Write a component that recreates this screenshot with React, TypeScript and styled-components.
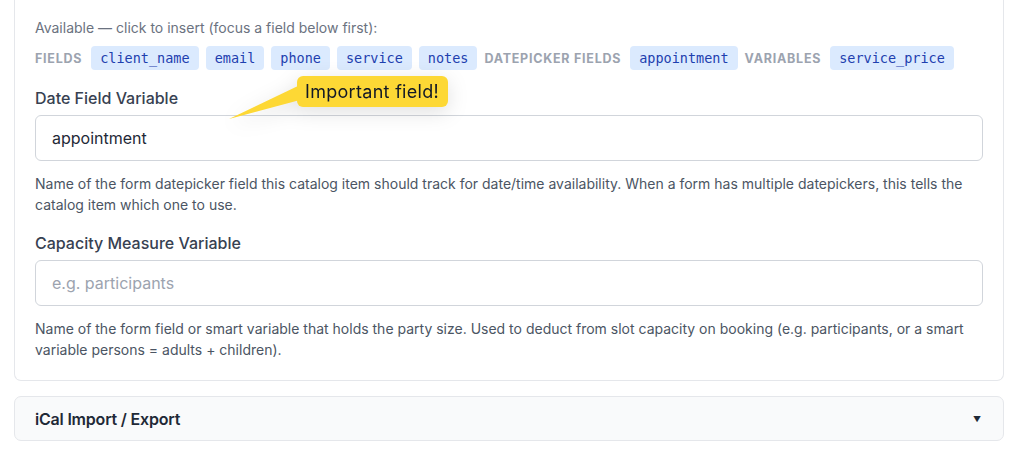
import React from "react";
import styled, { createGlobalStyle } from "styled-components";

const GlobalStyle = createGlobalStyle`
  html, body {
    margin: 0;
    padding: 0;
    background: #ffffff;
  }
  body {
    font-family: Inter, "Liberation Sans", Arial, sans-serif;
    -webkit-font-smoothing: antialiased;
  }
  * { box-sizing: border-box; }
`;

const Page = styled.div`
  width: 1024px;
  height: 451px;
  overflow: hidden;
  padding: 0 20px 0 14px;
  display: flex;
  flex-direction: column;
  gap: 15px;
`;

const Card = styled.section`
  position: relative;
  border: 1px solid #e5e7eb;
  border-top: none;
  border-radius: 0 0 7px 7px;
  background: #fff;
  padding: 18px 20px 20px 20px;
  display: flex;
  flex-direction: column;
`;

const Hint = styled.div`
  font-size: 14px;
  line-height: 20px;
  color: #6b7280;
`;

const ChipRow = styled.div`
  margin-top: 8px;
  display: flex;
  align-items: center;
  flex-wrap: wrap;
  gap: 7px;
`;

const GroupLabel = styled.span`
  font-size: 12.5px;
  font-weight: 700;
  letter-spacing: 0.06em;
  text-transform: uppercase;
  color: #9ca3af;
  margin-right: 2px;
`;

const Chip = styled.button`
  border: none;
  background: #dbeafe;
  color: #1e40af;
  border-radius: 4px;
  height: 24px;
  padding: 0 9px;
  font-family: "DejaVu Sans Mono", "Liberation Mono", monospace;
  font-size: 13.5px;
  line-height: 24px;
  cursor: pointer;
`;

const Field = styled.div`
  margin-top: 16px;
  display: flex;
  flex-direction: column;
`;

const Label = styled.label`
  font-size: 16px;
  line-height: 24px;
  font-weight: 500;
  color: #374151;
  margin-bottom: 5px;
`;

const Input = styled.input`
  width: 100%;
  height: 46px;
  border: 1px solid #d1d5db;
  border-radius: 6px;
  padding: 0 16px;
  font-family: Inter, "Liberation Sans", Arial, sans-serif;
  font-size: 16px;
  color: #1f2937;
  background: #fff;
  outline: none;
  &::placeholder {
    color: #9ca3af;
  }
`;

const Help = styled.p`
  margin: 12px 0 0 0;
  font-size: 14px;
  line-height: 21px;
  color: #4b5563;
`;

const Callout = styled.div`
  position: absolute;
  left: 199px;
  top: 76px;
  filter: drop-shadow(0 5px 10px rgba(0, 0, 0, 0.12));
  pointer-events: none;
`;

const CalloutBox = styled.div`
  position: relative;
  margin-left: 83px;
  background: #fdd835;
  color: #111827;
  border-radius: 6px;
  height: 31px;
  padding: 0 9px 0 8px;
  display: flex;
  align-items: center;
  font-size: 18px;
  letter-spacing: 0.3px;
  white-space: nowrap;
`;

const CalloutTail = styled.svg`
  position: absolute;
  left: 0;
  top: 0;
`;

const Accordion = styled.div`
  height: 45px;
  border: 1px solid #e5e7eb;
  border-radius: 7px;
  background: #f9fafb;
  padding: 0 20px;
  display: flex;
  align-items: center;
  justify-content: space-between;
`;

const AccordionTitle = styled.span`
  font-size: 16px;
  font-weight: 600;
  letter-spacing: -0.2px;
  color: #1f2937;
`;

const Caret = styled.span`
  font-size: 8px;
  color: #1f2937;
  margin-right: 2px;
`;

const fields = ["client_name", "email", "phone", "service", "notes"];

export default function App() {
  return (
    <>
      <GlobalStyle />
      <Page>
        <Card>
          <Hint>Available — click to insert (focus a field below first):</Hint>
          <ChipRow>
            <GroupLabel>Fields</GroupLabel>
            {fields.map((f) => (
              <Chip key={f}>{f}</Chip>
            ))}
            <GroupLabel>Datepicker fields</GroupLabel>
            <Chip>appointment</Chip>
            <GroupLabel>Variables</GroupLabel>
            <Chip>service_price</Chip>
          </ChipRow>

          <Field>
            <Label>Date Field Variable</Label>
            <Input defaultValue="appointment" />
            <Help>
              Name of the form datepicker field this catalog item should track for date/time
              availability. When a form has multiple datepickers, this tells the catalog item
              which one to use.
            </Help>
          </Field>

          <Field>
            <Label>Capacity Measure Variable</Label>
            <Input placeholder="e.g. participants" />
            <Help>
              Name of the form field or smart variable that holds the party size. Used to deduct
              from slot capacity on booking (e.g. participants, or a smart variable persons =
              adults + children).
            </Help>
          </Field>

          <Callout>
            <CalloutTail width="100" height="50" viewBox="0 0 100 50">
              <polygon points="86,9 15,43 86,24" fill="#fdd835" />
            </CalloutTail>
            <CalloutBox>Important field!</CalloutBox>
          </Callout>
        </Card>

        <Accordion>
          <AccordionTitle>iCal Import / Export</AccordionTitle>
          <Caret>▼</Caret>
        </Accordion>
      </Page>
    </>
  );
}
